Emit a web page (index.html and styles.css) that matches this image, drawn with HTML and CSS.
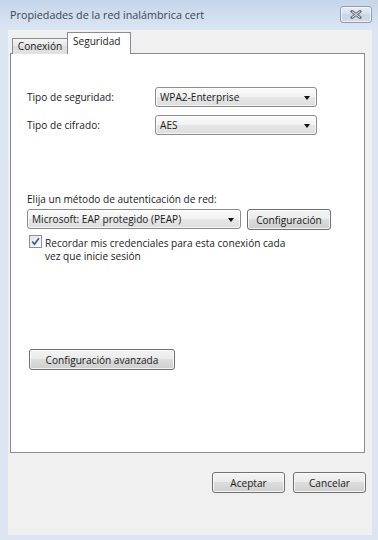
FILE: index.html
```html
<!DOCTYPE html>
<html lang="es">
<head>
    <meta charset="UTF-8">
    <meta name="viewport" content="width=device-width, initial-scale=1.0">
    <title>Propiedades de la red inalámbrica cert</title>
    <link rel="stylesheet" href="styles.css">
</head>
<body>

<div class="window">
    <div class="titlebar">
        <span class="title">Propiedades de la red inalámbrica cert</span>
        <button class="close" aria-label="Cerrar">
            <svg width="12" height="9" viewBox="0 0 12 9">
                <path d="M2 1.5 L10 7.5 M10 1.5 L2 7.5" stroke="#6f7478" stroke-width="3" stroke-linecap="square" fill="none"/>
                <path d="M2 1.5 L10 7.5 M10 1.5 L2 7.5" stroke="#e9edf2" stroke-width="1" stroke-linecap="butt" fill="none"/>
            </svg>
        </button>
    </div>

    <div class="client">
        <div class="tabs">
            <div class="tab">Conexión</div>
            <div class="tab active">Seguridad</div>
        </div>

        <div class="panel">
            <div class="fields">
                <label>Tipo de seguridad:</label>
                <div class="combo">WPA2-Enterprise<span class="arrow"></span></div>
                <label>Tipo de cifrado:</label>
                <div class="combo">AES<span class="arrow"></span></div>
            </div>

            <div class="auth">
                <div class="auth-label">Elija un método de autenticación de red:</div>
                <div class="auth-row">
                    <div class="combo method">Microsoft: EAP protegido (PEAP)<span class="arrow"></span></div>
                    <button class="btn config">Configuración</button>
                </div>
                <div class="check-row">
                    <span class="checkbox">
                        <svg width="9" height="9" viewBox="0 0 9 9">
                            <path d="M1.2 4.6 L3.5 7.3 L7.9 1.2" stroke="#2f55a8" stroke-width="1.6" fill="none"/>
                        </svg>
                    </span>
                    <span class="check-text">Recordar mis credenciales para esta conexión cada<br>vez que inicie sesión</span>
                </div>
            </div>

            <button class="btn advanced">Configuración avanzada</button>
        </div>

        <div class="footer">
            <button class="btn">Aceptar</button>
            <button class="btn">Cancelar</button>
        </div>
    </div>
</div>

</body>
</html>
```

FILE: styles.css
```css
body {
    margin: 0;
    font-family: 'Open Sans', 'Noto Sans', sans-serif;
    font-size: 10.1px;
    color: #1a1a1a;
    background-color: #dae5f2;
}
.window {
    width: 378px;
    height: 540px;
    background: linear-gradient(#c5d5ea, #dbe6f3 30px, #dce6f2);
}
.titlebar {
    height: 30px;
    display: flex;
    justify-content: space-between;
    align-items: flex-start;
}
.title {
    margin: 7px 0 0 10px;
    font-size: 10.8px;
    color: #3d4652;
}
.close {
    width: 32px;
    height: 17px;
    margin: 6px 6px 0 0;
    padding: 0;
    border: 1px solid #8d9db3;
    border-radius: 3px;
    background: linear-gradient(#e6edf5, #d5dfeb 50%, #cad6e5 50%, #d3dde9);
    box-shadow: inset 0 0 0 1px rgba(255, 255, 255, 0.6);
    display: flex;
    align-items: center;
    justify-content: center;
}
.client {
    margin: 0 6px 0 8px;
    height: 505px;
    background-color: #f0f0f0;
    padding: 3px 7px 0 2px;
    box-sizing: border-box;
}
.tabs {
    display: flex;
    align-items: flex-end;
    height: 21px;
    padding-left: 2px;
    margin-bottom: -1px;
}
.tab {
    height: 16px;
    line-height: 15px;
    padding: 0 4px;
    border: 1px solid #898c95;
    border-bottom: none;
    background: linear-gradient(#f4f4f4, #e6e6e6 50%, #dcdcdc 50%, #e2e2e2);
    box-sizing: border-box;
    width: 56px;
    text-align: center;
}
.tab.active {
    position: relative;
    height: 22px;
    width: 64px;
    margin-left: -1px;
    background: #fff;
    line-height: 17px;
    text-align: left;
    padding-left: 5px;
}
.panel {
    height: 400px;
    border: 1px solid #898c95;
    background: #fff;
    box-sizing: border-box;
    padding: 33px 0 0 16px;
}
.fields {
    display: grid;
    grid-template-columns: 128px 162px;
    row-gap: 8px;
    align-items: center;
}
.combo {
    position: relative;
    height: 20px;
    line-height: 18px;
    padding-left: 4px;
    border: 1px solid #8c8c8c;
    border-radius: 3px;
    background: linear-gradient(#fbfbfb, #f1f1f1 50%, #e6e6e6 50%, #dedede);
    box-shadow: inset 0 0 0 1px rgba(255, 255, 255, 0.7);
    box-sizing: border-box;
}
.arrow {
    position: absolute;
    right: 6px;
    top: 8px;
    border-left: 3.5px solid transparent;
    border-right: 3.5px solid transparent;
    border-top: 4px solid #111;
}
.auth {
    margin-top: 57px;
}
.auth-label {
    line-height: 14px;
    margin-bottom: 3px;
}
.auth-row {
    display: flex;
    gap: 6px;
}
.combo.method {
    width: 214px;
}
.btn {
    height: 21px;
    padding: 0;
    font-family: inherit;
    font-size: inherit;
    font-weight: normal;
    color: #1a1a1a;
    border: 1px solid #707070;
    border-radius: 3px;
    background: linear-gradient(#f3f3f3, #ebebeb 50%, #dddddd 50%, #cfcfcf);
    box-shadow: inset 0 0 0 1px rgba(255, 255, 255, 0.75);
    box-sizing: border-box;
}
.config {
    width: 84px;
}
.check-row {
    display: flex;
    align-items: flex-start;
    gap: 3px;
    margin: 5px 0 0 2px;
}
.checkbox {
    width: 13px;
    height: 13px;
    box-sizing: border-box;
    border: 1px solid #8e8f8f;
    background: linear-gradient(135deg, #e4e4e4, #fafafa);
    display: flex;
    align-items: center;
    justify-content: center;
}
.check-text {
    line-height: 13px;
    margin-top: 2px;
}
.advanced {
    display: block;
    width: 146px;
    margin: 86px 0 0 2px;
}
.footer {
    display: flex;
    justify-content: flex-end;
    gap: 8px;
    margin-top: 19px;
    margin-right: -1px;
}
.footer .btn {
    width: 73px;
}
```
